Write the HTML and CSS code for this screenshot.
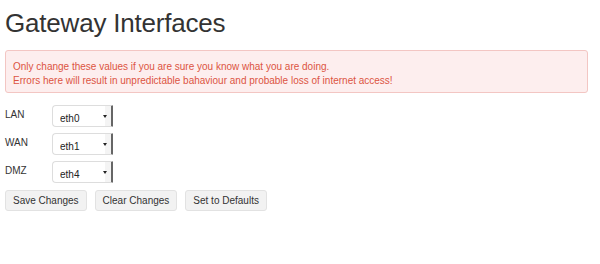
FILE: index.html
```html
<html lang="en">
<head>
    <meta charset="UTF-8">
    <title>Gateway Interfaces</title>
    <link rel="stylesheet" href="styles.css">
</head>
<body>

    <div id="page">
        <h1>Gateway Interfaces</h1>

        <div class="alert">
            Only change these values if you are sure you know what you are doing.<br>
            Errors here will result in unpredictable bahaviour and probable loss of internet access!
        </div>

        <div class="rows">
            <div class="row">
                <label for="lan">LAN</label>
                <span class="sel">
                    <select id="lan">
                        <option selected>eth0</option>
                        <option>eth1</option>
                        <option>eth4</option>
                    </select>
                </span>
            </div>
            <div class="row">
                <label for="wan">WAN</label>
                <span class="sel">
                    <select id="wan">
                        <option>eth0</option>
                        <option selected>eth1</option>
                        <option>eth4</option>
                    </select>
                </span>
            </div>
            <div class="row">
                <label for="dmz">DMZ</label>
                <span class="sel">
                    <select id="dmz">
                        <option>eth0</option>
                        <option>eth1</option>
                        <option selected>eth4</option>
                    </select>
                </span>
            </div>
        </div>

        <div class="buttons">
            <button class="btn">Save Changes</button>
            <button class="btn">Clear Changes</button>
            <button class="btn">Set to Defaults</button>
        </div>
    </div>

</body>
</html>
```

FILE: styles.css
```css
* {
    font-family: 'Liberation Sans', Arial, sans-serif;
    box-sizing: border-box;
}

body {
    margin: 0;
    background: #fff;
    color: #333;
}

#page {
    padding: 0 12px 0 5px;
}

h1 {
    font-size: 26px;
    font-weight: normal;
    color: #333;
    margin: 0;
    padding-top: 8px;
    height: 50px;
    letter-spacing: -0.2px;
}

.alert {
    background: #fdeeee;
    border: 1px solid #f3c6c3;
    border-radius: 3px;
    color: #dc5442;
    font-size: 10px;
    line-height: 14px;
    padding: 9px 7px 6px 7px;
    height: 43px;
}

.rows {
    display: flex;
    flex-direction: column;
    gap: 6px;
    margin-top: 12px;
}

.row {
    display: flex;
    align-items: flex-start;
    height: 22px;
}

.row label {
    width: 47px;
    font-size: 10px;
    padding-top: 4px;
    color: #333;
}

.sel {
    position: relative;
    display: inline-block;
}

.sel select {
    appearance: none;
    -webkit-appearance: none;
    width: 61px;
    height: 22px;
    border: 1px solid #ddd;
    border-right: 2px solid #666;
    border-radius: 4px 1px 1px 4px;
    background: linear-gradient(to right, #fff 52px, #f4f4f4 52px);
    font-size: 10px;
    color: #222;
    padding: 4px 0 0 7px;
    outline: none;
}

.sel::after {
    content: "";
    position: absolute;
    right: 6px;
    top: 10px;
    border-left: 2px solid transparent;
    border-right: 2px solid transparent;
    border-top: 3px solid #222;
    pointer-events: none;
}

.buttons {
    display: flex;
    gap: 8px;
    margin-top: 7px;
}

.btn {
    background: #f2f2f2;
    border: 1px solid #e2e2e2;
    border-radius: 3px;
    font-size: 10px;
    color: #333;
    height: 21px;
    padding: 0 7px;
}
```
